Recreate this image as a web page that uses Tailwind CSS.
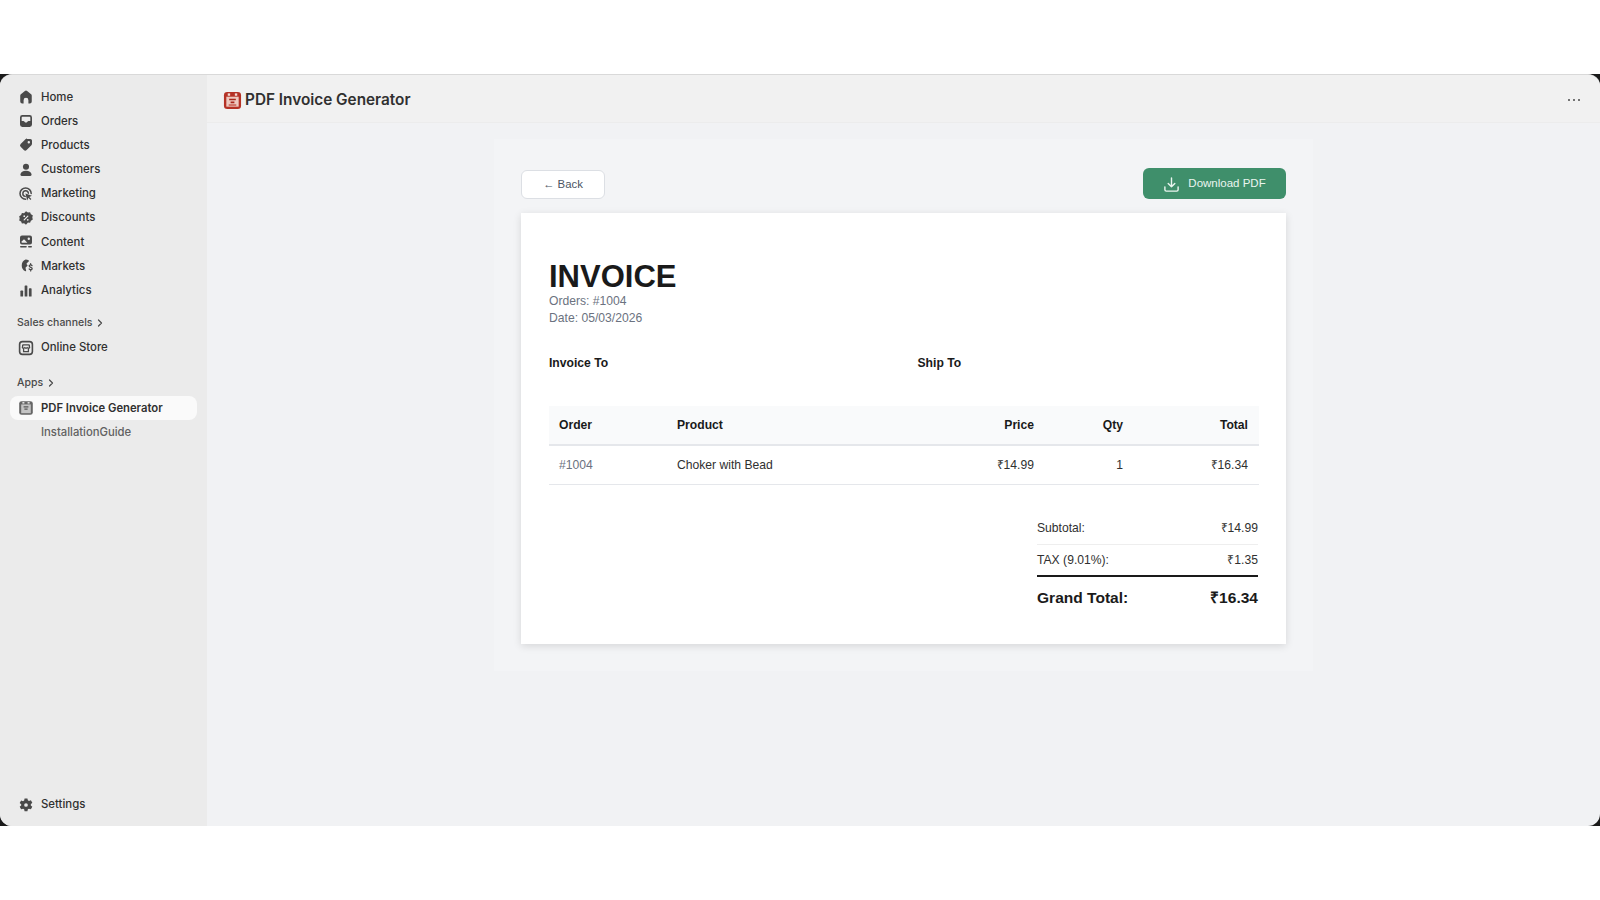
<!DOCTYPE html>
<html lang="en">
<head>
  <meta charset="UTF-8" />
  <title>PDF Invoice Generator</title>
  <script src="https://cdn.jsdelivr.net/npm/@tailwindcss/browser@4"></script>
</head>
<body class="bg-white h-[900px] overflow-hidden font-['Inter',sans-serif]">
  <div class="h-[74px]"></div>

  <!-- Admin frame -->
  <div class="h-[752px] bg-[#1a1a1a]">
    <div class="h-full flex rounded-[12px] overflow-hidden bg-[#f1f2f4] border-t border-[#d9d9d9]">

      <!-- Sidebar -->
      <aside class="w-[207px] shrink-0 bg-[#ebebeb] flex flex-col pt-[10px] pb-[9px] text-[11.400px] font-medium text-[#303030]">
        <nav class="flex flex-col">
          <a class="h-[24.2px] flex items-center pl-[18px] gap-[7px]">
            <svg class="w-[16px] h-[16px] text-[#4a4a4a]" viewBox="0 0 20 20" fill="currentColor"><path d="M8.600 2.600a2.200 2.200 0 0 1 2.800 0l5 4.100c.5.400.8 1 .8 1.700V15.500A2.500 2.500 0 0 1 14.700 18H13v-4a3 3 0 0 0-6 0v4H5.300A2.500 2.500 0 0 1 2.800 15.500V8.400c0-.7.300-1.300.8-1.700z"/></svg>
            <span>Home</span>
          </a>
          <a class="h-[24.2px] flex items-center pl-[18px] gap-[7px]">
            <svg class="w-[16px] h-[16px] text-[#4a4a4a]" viewBox="0 0 20 20" fill="currentColor"><path fill-rule="evenodd" d="M5.500 2.500A3 3 0 0 0 2.500 5.500v9a3 3 0 0 0 3 3h9a3 3 0 0 0 3-3v-9a3 3 0 0 0-3-3zM4.600 5.500c0-.5.400-.9.900-.9h9c.5 0 .9.400.9.900V10h-2.300c-.6 0-1 .3-1.300.8l-.3.600c-.1.300-.4.500-.7.500H9.100c-.3 0-.6-.2-.7-.5l-.3-.6c-.3-.5-.7-.8-1.300-.8H4.600z"/></svg>
            <span>Orders</span>
          </a>
          <a class="h-[24.2px] flex items-center pl-[18px] gap-[7px]">
            <svg class="w-[16px] h-[16px] text-[#4a4a4a]" viewBox="0 0 20 20" fill="currentColor"><path fill-rule="evenodd" d="M11.500 2.500H15.500A2 2 0 0 1 17.500 4.500V8.500c0 .7-.3 1.300-.7 1.800l-6 6a2.500 2.500 0 0 1-3.500 0l-4-4a2.500 2.500 0 0 1 0-3.500l6-6c.5-.4 1.100-.8 1.800-.8zM13.500 8a1.500 1.500 0 1 0 0-3 1.500 1.500 0 0 0 0 3z"/></svg>
            <span>Products</span>
          </a>
          <a class="h-[24.2px] flex items-center pl-[18px] gap-[7px]">
            <svg class="w-[16px] h-[16px] text-[#4a4a4a]" viewBox="0 0 20 20" fill="currentColor"><circle cx="10" cy="6" r="3.800"/><path d="M10 11c-3.800 0-6.800 1.900-7 4.700-.1 1 .7 1.800 1.500 1.800h11c.8 0 1.600-.8 1.500-1.800-.2-2.800-3.200-4.700-7-4.700z"/></svg>
            <span>Customers</span>
          </a>
          <a class="h-[24.2px] flex items-center pl-[18px] gap-[7px]">
            <svg class="w-[16px] h-[16px] text-[#4a4a4a]" viewBox="0 0 20 20" fill="none" stroke="currentColor"><path stroke-width="1.900" stroke-linecap="round" d="M9.500 16.500a7 7 0 1 1 7-7"/><path stroke-width="1.800" stroke-linecap="round" d="M9 13a3.500 3.500 0 1 1 4-4"/><path fill="currentColor" stroke="none" d="M9.300 9.300l8.200 2.800-3.400 1.500 2.600 2.700-1.100 1.100-2.600-2.700-1.500 3.400z"/></svg>
            <span>Marketing</span>
          </a>
          <a class="h-[24.2px] flex items-center pl-[18px] gap-[7px]">
            <svg class="w-[16px] h-[16px] text-[#4a4a4a]" viewBox="0 0 20 20"><path fill="currentColor" d="M10 1.500l2.400 1.500 2.700-.2 1 2.500 2.400 1.400-.6 2.600.6 2.700-2.400 1.300-1 2.500-2.700-.2L10 18.500l-2.400-1.900-2.700.2-1-2.500-2.400-1.300.6-2.700-.6-2.600 2.400-1.400 1-2.500 2.700.2z"/><path stroke="#ebebeb" stroke-width="1.500" stroke-linecap="round" d="M12.300 7.700l-4.600 4.600"/><circle cx="7.800" cy="7.800" r="1.100" fill="#ebebeb"/><circle cx="12.200" cy="12.200" r="1.100" fill="#ebebeb"/></svg>
            <span>Discounts</span>
          </a>
          <a class="h-[24.2px] flex items-center pl-[18px] gap-[7px]">
            <svg class="w-[16px] h-[16px] text-[#4a4a4a]" viewBox="0 0 20 20" fill="currentColor"><path fill-rule="evenodd" d="M5 2h10A2.500 2.500 0 0 1 17.500 4.500v6A2.500 2.500 0 0 1 15 13H5A2.500 2.500 0 0 1 2.500 10.500v-6A2.500 2.500 0 0 1 5 2zM4.200 9.800l2.600-2.600c.4-.4 1-.4 1.400 0l3.500 3.700H5c-.5 0-.8-.5-.8-1.100zM13.500 7.500a1.500 1.500 0 1 0 0-3 1.500 1.500 0 0 0 0 3z"/><rect x="2.500" y="15" width="8.500" height="2" rx="1"/><rect x="12.500" y="15" width="5" height="2" rx="1"/></svg>
            <span>Content</span>
          </a>
          <a class="h-[24.2px] flex items-center pl-[18px] gap-[7px]">
            <svg class="w-[16px] h-[16px] text-[#4a4a4a]" viewBox="0 0 20 20" fill="currentColor"><path d="M9.500 2a8 8 0 0 1 4.100 1.100c.4.200.3.700 0 1l-2.300 2c-.6.500-.7 1.400-.2 2l.6.700c.3.400.3 1-.1 1.300l-1.800 1.600c-.3.300-.4.700-.3 1.100l.7 3c.1.500-.2 1-.7.900A8 8 0 0 1 9.500 2z"/><path fill="none" stroke="currentColor" stroke-width="1.600" stroke-linecap="round" d="M17.500 9.500c-.4-.7-1-1-1.700-1-1 0-1.800.6-1.800 1.500 0 2 3.700 1.200 3.700 3.200 0 .9-.8 1.500-1.900 1.500-.8 0-1.500-.4-1.900-1M15.800 7.200v1.300M15.800 14.700v1.500"/></svg>
            <span>Markets</span>
          </a>
          <a class="h-[24.2px] flex items-center pl-[18px] gap-[7px]">
            <svg class="w-[16px] h-[16px] text-[#4a4a4a]" viewBox="0 0 20 20" fill="currentColor"><rect x="3" y="9.500" width="3.400" height="7.500" rx=".9"/><rect x="8.300" y="3" width="3.400" height="14" rx=".9"/><rect x="13.600" y="6.500" width="3.400" height="10.500" rx=".9"/></svg>
            <span>Analytics</span>
          </a>
        </nav>

        <div class="h-[24px] mt-[8px] flex items-center pl-[17px] gap-[3px] text-[10.500px] text-[#4a4a4a]">
          <span>Sales channels</span>
          <svg class="w-[10px] h-[10px]" viewBox="0 0 10 10" fill="none" stroke="currentColor" stroke-width="1.200" stroke-linecap="round" stroke-linejoin="round"><path d="M3.500 2l3 3-3 3"/></svg>
        </div>
        <a class="h-[24.2px] mt-[1px] flex items-center pl-[18px] gap-[7px]">
          <svg class="w-[16px] h-[16px] text-[#4a4a4a]" viewBox="0 0 20 20" fill="none" stroke="currentColor"><rect x="2" y="2" width="16" height="16" rx="3.500" stroke-width="2"/><path stroke-width="1.600" d="M5.500 6h9M6 6.500 5.500 9.500c.8 1 2 1 3 0 .8 1 2.200 1 3 0 1 1 2.200 1 3 0L14 6.500M7 10.500V14.500h6V10.500"/></svg>
          <span>Online Store</span>
        </a>

        <div class="h-[24px] mt-[11px] flex items-center pl-[17px] gap-[3px] text-[10.500px] text-[#4a4a4a]">
          <span>Apps</span>
          <svg class="w-[10px] h-[10px]" viewBox="0 0 10 10" fill="none" stroke="currentColor" stroke-width="1.200" stroke-linecap="round" stroke-linejoin="round"><path d="M3.500 2l3 3-3 3"/></svg>
        </div>
        <a class="h-[24.2px] mt-[1px] ml-[10px] mr-[10px] pl-[8px] flex items-center gap-[7px] bg-[#fafafa] rounded-[8px] text-[11.270px] font-semibold text-[#303030]">
          <svg class="w-[16px] h-[16px]" viewBox="0 0 20 20"><rect x="1.500" y="1.500" width="17" height="17" rx="3" fill="#666"/><rect x="4" y="5.500" width="12" height="11" fill="#c4c4c4"/><rect x="5.500" y="2.500" width="2.500" height="2" fill="#ddd"/><rect x="12" y="2.500" width="2.500" height="2" fill="#ddd"/><path d="M7 8.500h6M8 11.500h4" stroke="#555" stroke-width="1.500"/></svg>
          <span>PDF Invoice Generator</span>
        </a>
        <a class="h-[24.2px] flex items-center pl-[41px] text-[11.270px] text-[#616161]">InstallationGuide</a>

        <a class="h-[24.2px] mt-auto flex items-center pl-[18px] gap-[7px]">
          <svg class="w-[16px] h-[16px] text-[#4a4a4a]" viewBox="0 0 20 20" fill="currentColor"><path fill-rule="evenodd" d="M8.200 1.800h3.600l.5 2.400 1.400.8 2.400-.8 1.800 3.100-1.900 1.700v1.600l1.900 1.700-1.800 3.100-2.400-.8-1.400.8-.5 2.400H8.200l-.5-2.400-1.400-.8-2.400.8-1.800-3.100 1.900-1.700V9.200L2.100 7.500l1.800-3.100 2.400.8 1.400-.8zM10 12.300a2.300 2.300 0 1 0 0-4.600 2.300 2.300 0 0 0 0 4.600z"/></svg>
          <span>Settings</span>
        </a>
      </aside>

      <!-- Main column -->
      <div class="flex-1 flex flex-col min-w-0">
        <header class="h-[48px] shrink-0 bg-[#f1f1f1] border-b border-[#ececec] flex items-center pt-[3px] pl-[16px] pr-[20px]">
          <svg class="w-[19px] h-[19px] mr-[3px]" viewBox="0 0 20 20"><rect x="1" y="1" width="18" height="18" rx="3.500" fill="#b53226"/><rect x="3.500" y="6" width="13" height="10.500" fill="#eec9c0"/><rect x="5" y="2.500" width="2.500" height="2.500" fill="#f3dcd6"/><rect x="12.500" y="2.500" width="2.500" height="2.500" fill="#f3dcd6"/><path d="M6.500 9h7M8 12h4" stroke="#a8281c" stroke-width="1.700"/><rect x="6" y="14" width="8" height="1.500" fill="#c9574a"/></svg>
          <h1 class="text-[15.330px] font-semibold text-[#303030]">PDF Invoice Generator</h1>
          <button class="ml-auto flex gap-[2.500px]">
            <span class="w-[2.500px] h-[2.500px] rounded-full bg-[#4a4a4a]"></span>
            <span class="w-[2.500px] h-[2.500px] rounded-full bg-[#4a4a4a]"></span>
            <span class="w-[2.500px] h-[2.500px] rounded-full bg-[#4a4a4a]"></span>
          </button>
        </header>

        <!-- Invoice panel -->
        <main class="flex-1 pt-[16px] pl-[287px]">
          <div class="w-[819px] bg-[#f3f4f6] px-[27px] pt-[29px] pb-[27px] font-['Liberation_Sans',sans-serif]">
            <div class="flex items-center justify-between h-[31px] mb-[13.500px]">
              <button class="w-[84px] h-[29px] mt-[2px] bg-white border border-[#dcdfe4] rounded-[6px] text-[11.400px] text-[#4b5563]">← Back</button>
              <button class="w-[143px] h-[31px] bg-[#3f8f6b] rounded-[6px] flex items-center justify-center gap-[8px] pt-[1px] text-[11.500px] text-[#eaf5ef]">
                <svg class="w-[17px] h-[17px]" viewBox="0 0 18 18" fill="none" stroke="currentColor" stroke-width="1.500" stroke-linecap="round" stroke-linejoin="round"><path d="M9 2v9.500M5.500 8 9 11.500 12.500 8M2 11.500v3c0 .8.700 1.500 1.500 1.500h11c.8 0 1.500-.7 1.500-1.500v-3"/></svg>
                Download PDF
              </button>
            </div>

            <div class="h-[431px] bg-white shadow-[0_2px_8px_rgba(0,0,0,0.12)] pl-[28px] pr-[27px] pt-[47px]">
              <h2 class="text-[31px] leading-[33.500px] font-bold text-[#1a1a1a]">INVOICE</h2>
              <p class="text-[12.150px] leading-[17.400px] text-[#6b7280]">Orders: #1004</p>
              <p class="text-[12.150px] leading-[17.400px] text-[#6b7280]">Date: 05/03/2026</p>

              <div class="flex mt-[25.600px] text-[12.150px] leading-[20px] font-bold text-[#1a1a1a]">
                <div class="w-[368.500px]">Invoice To</div>
                <div>Ship To</div>
              </div>

              <table class="w-full table-fixed mt-[33px] text-[12.150px] border-collapse">
                <thead>
                  <tr class="h-[39px] bg-[#f9fafb] border-b-2 border-[#e5e7eb] text-[#1a1a1a] font-bold">
                    <th class="w-[118px] px-[10px] text-left">Order</th>
                    <th class="w-[300px] px-[10px] text-left">Product</th>
                    <th class="pl-[10px] pr-[11px] text-right">Price</th>
                    <th class="w-[89px] pl-[10px] pr-[11px] text-right">Qty</th>
                    <th class="w-[125px] pl-[10px] pr-[11px] text-right">Total</th>
                  </tr>
                </thead>
                <tbody>
                  <tr class="h-[39px] border-b border-[#e5e7eb] text-[#303030]">
                    <td class="px-[10px] text-[#6b7280]">#1004</td>
                    <td class="px-[10px]">Choker with Bead</td>
                    <td class="pl-[10px] pr-[11px] text-right">₹14.99</td>
                    <td class="pl-[10px] pr-[11px] text-right">1</td>
                    <td class="pl-[10px] pr-[11px] text-right">₹16.34</td>
                  </tr>
                </tbody>
              </table>

              <div class="ml-auto mr-[1px] w-[221px] mt-[28px] text-[12.150px] text-[#303030]">
                <div class="h-[32px] flex items-center justify-between border-b border-[#eeeeee]"><span>Subtotal:</span><span>₹14.99</span></div>
                <div class="h-[32.500px] flex items-center justify-between border-b-2 border-[#1a1a1a]"><span>TAX (9.01%):</span><span>₹1.35</span></div>
                <div class="h-[40px] flex items-center justify-between text-[15.550px] font-bold text-[#1a1a1a]"><span>Grand Total:</span><span>₹16.34</span></div>
              </div>
            </div>
          </div>
        </main>
      </div>
    </div>
  </div>
</body>
</html>
